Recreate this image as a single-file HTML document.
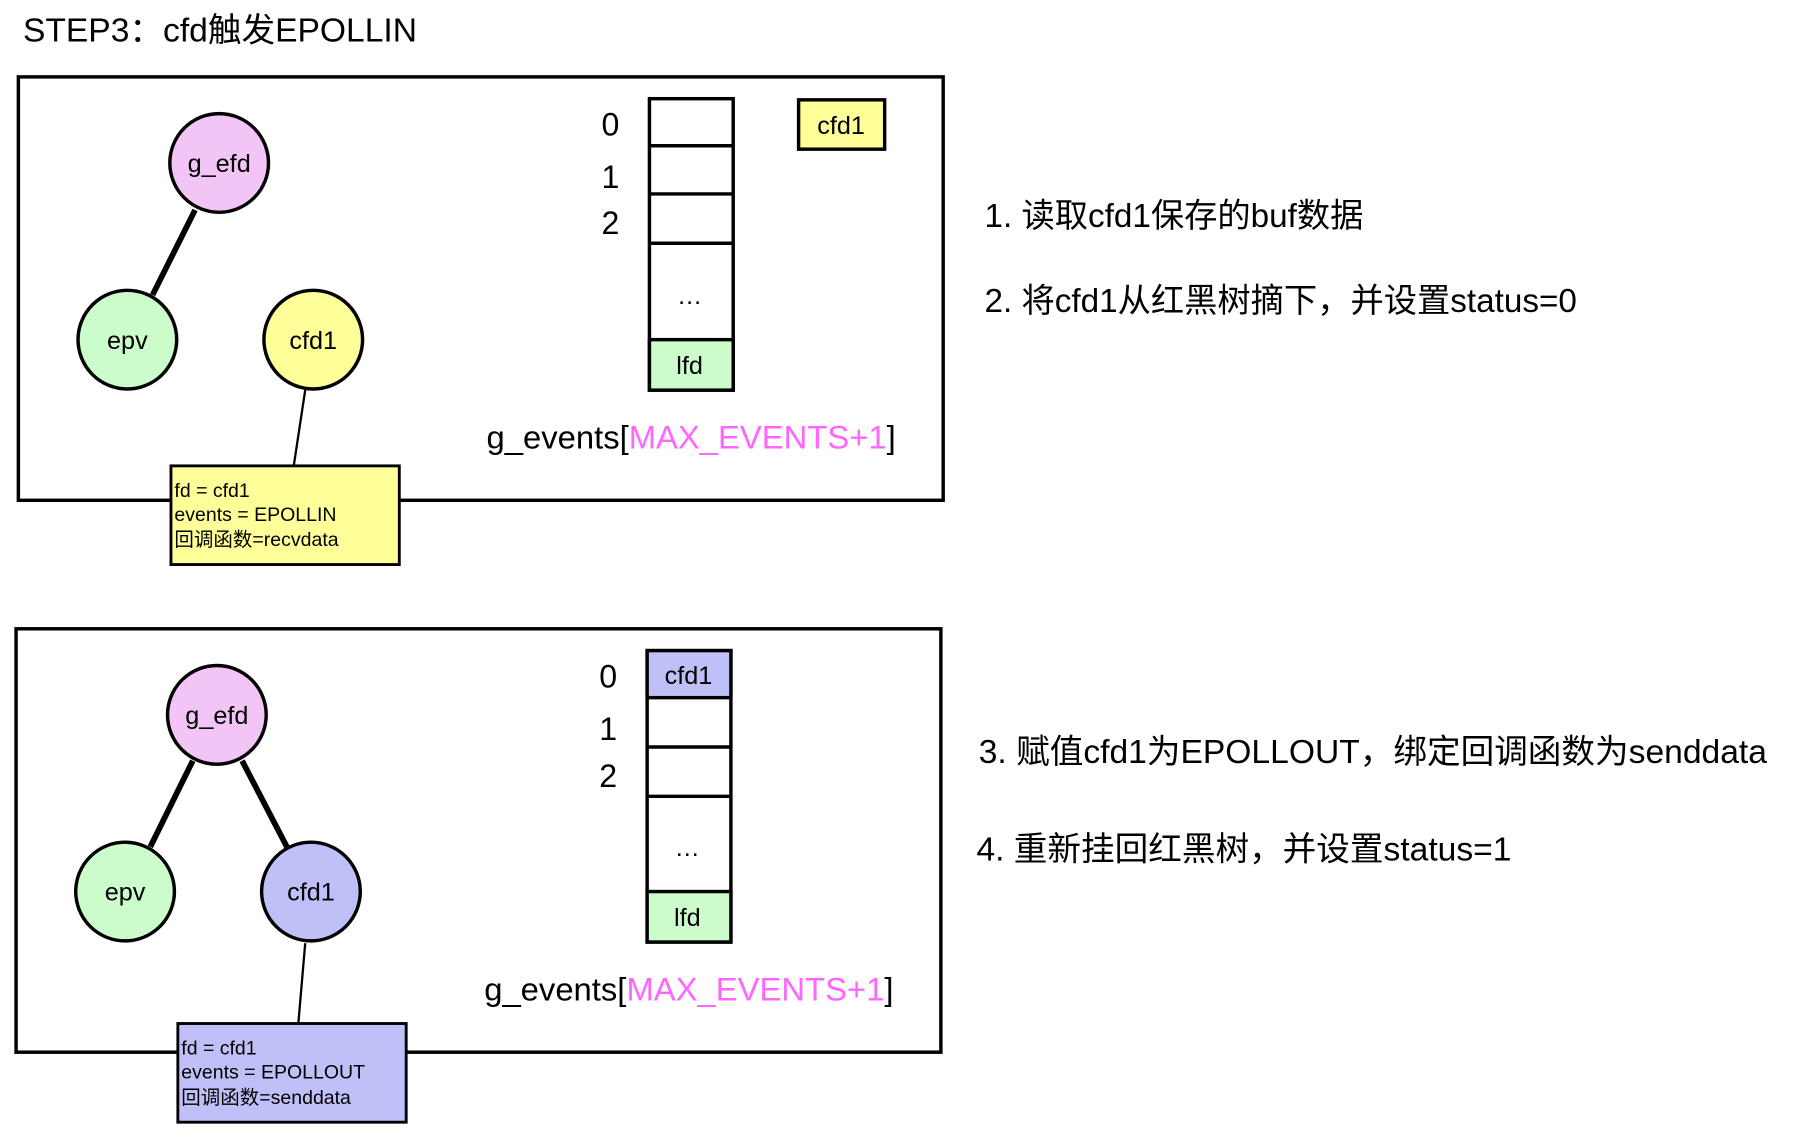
<!DOCTYPE html>
<html><head><meta charset="utf-8"><style>
html,body{margin:0;padding:0;background:#fff;width:1798px;height:1144px;overflow:hidden}
text{font-family:"Liberation Sans","Noto Sans CJK SC",sans-serif;fill:#000}
</style></head><body>
<svg width="1798" height="1144" viewBox="0 0 1567 997" xmlns="http://www.w3.org/2000/svg">
<rect width="1567" height="997" fill="#fff"/>
<text x="20" y="36" font-size="29.3">STEP3：cfd触发EPOLLIN</text>

<!-- Box 1 -->
<rect x="16" y="67" width="806" height="369" fill="none" stroke="#000" stroke-width="3"/>
<line x1="170" y1="183" x2="133" y2="257" stroke="#000" stroke-width="5"/>
<line x1="266" y1="340" x2="256" y2="406" stroke="#000" stroke-width="2"/>
<circle cx="191" cy="142" r="43" fill="#f3c5f7" stroke="#000" stroke-width="3"/>
<circle cx="111" cy="296" r="43" fill="#ccfccb" stroke="#000" stroke-width="3"/>
<circle cx="273" cy="296" r="43" fill="#ffff99" stroke="#000" stroke-width="3"/>
<text x="191" y="150" font-size="22" text-anchor="middle">g_efd</text>
<text x="111" y="304" font-size="22" text-anchor="middle">epv</text>
<text x="273" y="304" font-size="22" text-anchor="middle">cfd1</text>
<rect x="149" y="406" width="199" height="86" fill="#ffff99" stroke="#000" stroke-width="2.5"/>
<text x="152" y="433" font-size="17">fd = cfd1</text>
<text x="152" y="454" font-size="17">events = EPOLLIN</text>
<text x="152" y="476" font-size="17">回调函数=recvdata</text>

<g stroke="#000" stroke-width="3">
<rect x="566" y="86" width="73" height="254" fill="#fff"/>
<rect x="566" y="296" width="73" height="44" fill="#ccfccb"/>
<line x1="566" y1="127" x2="639" y2="127"/>
<line x1="566" y1="169" x2="639" y2="169"/>
<line x1="566" y1="212" x2="639" y2="212"/>
</g>
<text x="532" y="118" font-size="28" text-anchor="middle">0</text>
<text x="532" y="164" font-size="28" text-anchor="middle">1</text>
<text x="532" y="204" font-size="28" text-anchor="middle">2</text>
<text x="601" y="265" font-size="22" text-anchor="middle">…</text>
<text x="601" y="326" font-size="22" text-anchor="middle">lfd</text>
<rect x="696" y="87" width="75" height="43" fill="#ffff99" stroke="#000" stroke-width="3"/>
<text x="733" y="117" font-size="22" text-anchor="middle">cfd1</text>
<text x="424" y="391" font-size="28.6">g_events[<tspan style="fill:#ff66ff">MAX_EVENTS+1</tspan>]</text>

<text x="858" y="198" font-size="29">1. 读取cfd1保存的buf数据</text>
<text x="858" y="272" font-size="29">2. 将cfd1从红黑树摘下，并设置status=0</text>

<!-- Box 2 -->
<rect x="14" y="548" width="806" height="369" fill="none" stroke="#000" stroke-width="3"/>
<line x1="168" y1="663" x2="131" y2="738" stroke="#000" stroke-width="5"/>
<line x1="211" y1="663" x2="250" y2="738" stroke="#000" stroke-width="5"/>
<line x1="266" y1="822" x2="260" y2="892" stroke="#000" stroke-width="2"/>
<circle cx="189" cy="623" r="43" fill="#f3c5f7" stroke="#000" stroke-width="3"/>
<circle cx="109" cy="777" r="43" fill="#ccfccb" stroke="#000" stroke-width="3"/>
<circle cx="271" cy="777" r="43" fill="#c0c0f8" stroke="#000" stroke-width="3"/>
<text x="189" y="631" font-size="22" text-anchor="middle">g_efd</text>
<text x="109" y="785" font-size="22" text-anchor="middle">epv</text>
<text x="271" y="785" font-size="22" text-anchor="middle">cfd1</text>
<rect x="155" y="892" width="199" height="86" fill="#c0c0f8" stroke="#000" stroke-width="2.5"/>
<text x="158" y="919" font-size="17">fd = cfd1</text>
<text x="158" y="940" font-size="17">events = EPOLLOUT</text>
<text x="158" y="962" font-size="17">回调函数=senddata</text>

<g stroke="#000" stroke-width="3">
<rect x="564" y="567" width="73" height="254" fill="#fff"/>
<rect x="564" y="567" width="73" height="41" fill="#c0c0f8"/>
<rect x="564" y="777" width="73" height="44" fill="#ccfccb"/>
<line x1="564" y1="651" x2="637" y2="651"/>
<line x1="564" y1="694" x2="637" y2="694"/>
</g>
<text x="600" y="596" font-size="22" text-anchor="middle">cfd1</text>
<text x="530" y="599" font-size="28" text-anchor="middle">0</text>
<text x="530" y="645" font-size="28" text-anchor="middle">1</text>
<text x="530" y="686" font-size="28" text-anchor="middle">2</text>
<text x="599" y="746" font-size="22" text-anchor="middle">…</text>
<text x="599" y="807" font-size="22" text-anchor="middle">lfd</text>
<text x="422" y="872" font-size="28.6">g_events[<tspan style="fill:#ff66ff">MAX_EVENTS+1</tspan>]</text>

<text x="853" y="665" font-size="29.3">3. 赋值cfd1为EPOLLOUT，绑定回调函数为senddata</text>
<text x="851" y="750" font-size="29.3">4. 重新挂回红黑树，并设置status=1</text>
</svg>
</body></html>
